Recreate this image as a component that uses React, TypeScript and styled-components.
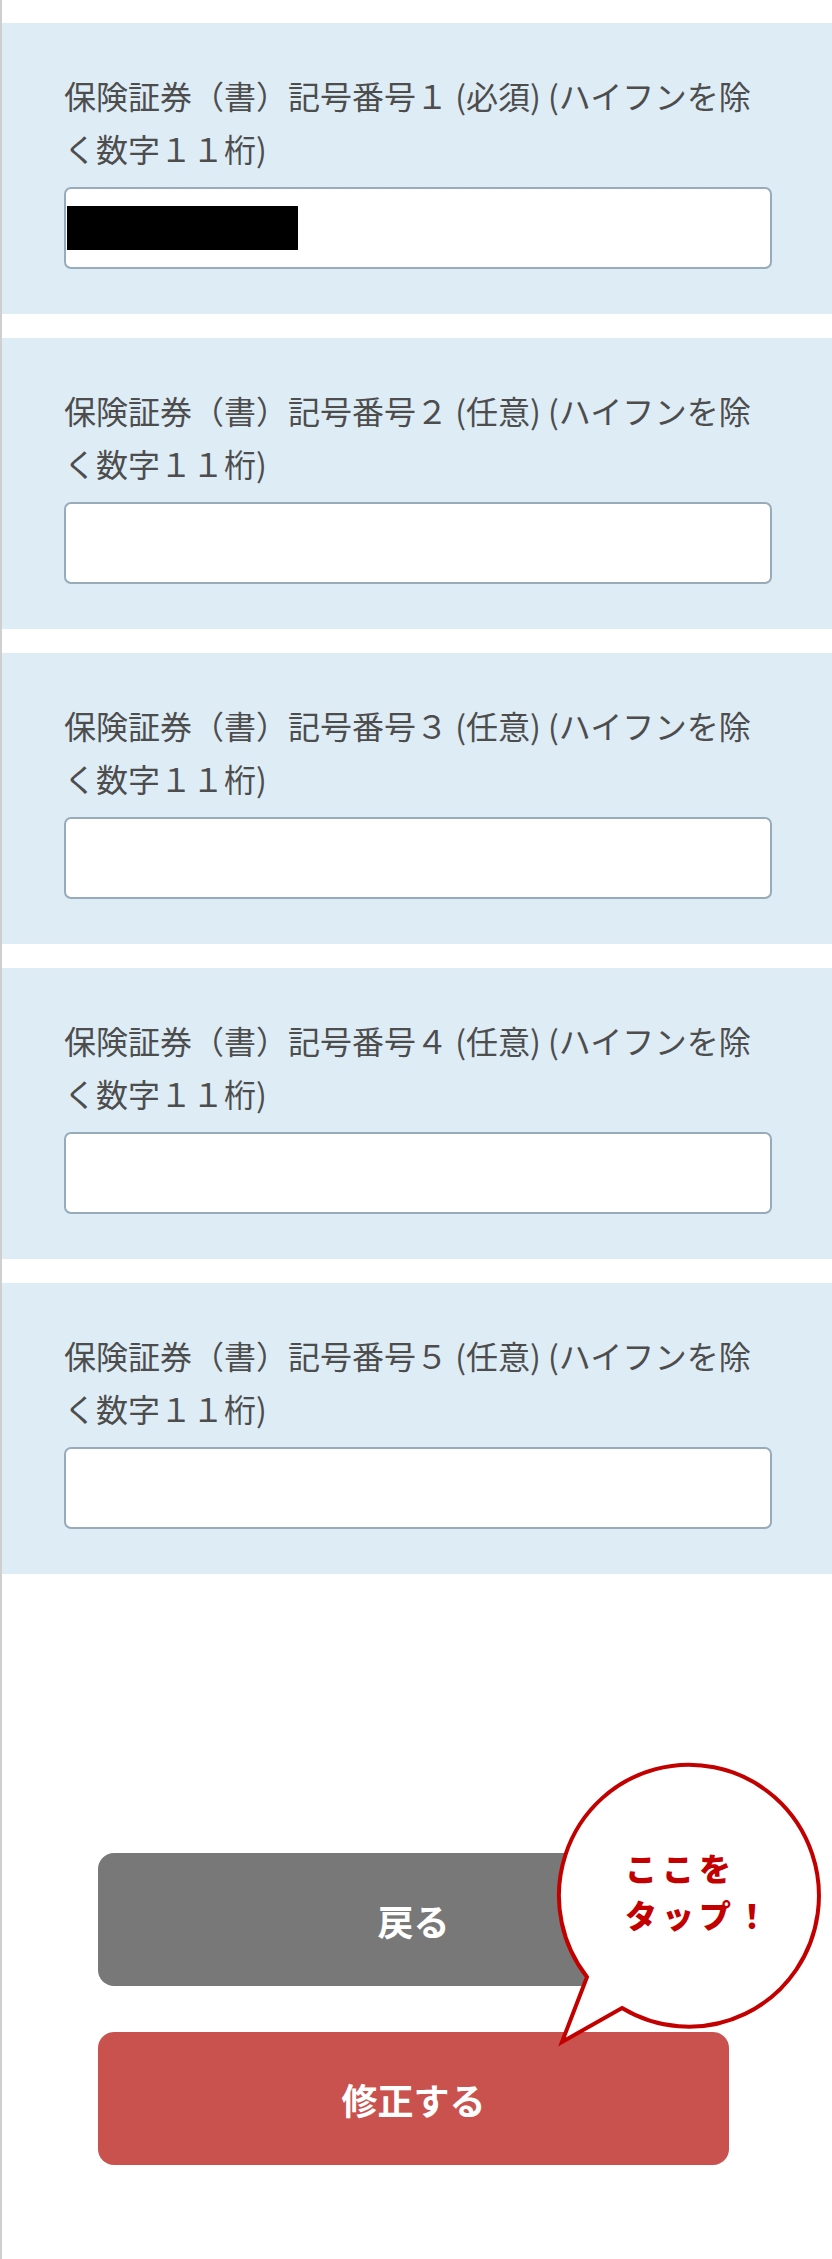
import React from "react";
import styled, { createGlobalStyle } from "styled-components";

const GlobalStyle = createGlobalStyle`
  html, body {
    margin: 0;
    padding: 0;
    background: #ffffff;
  }
  body {
    font-family: "Noto Sans CJK JP", "Noto Sans", sans-serif;
  }
  * {
    box-sizing: border-box;
  }
`;

interface Field {
  id: number;
  required: boolean;
  redacted?: boolean;
}

const fields: Field[] = [
  { id: 1, required: true, redacted: true },
  { id: 2, required: false },
  { id: 3, required: false },
  { id: 4, required: false },
  { id: 5, required: false },
];

// full-width digit, as on the original form
const toWide = (n: number) => String.fromCharCode(0xff10 + n);

const labelText = (field: Field) =>
  `保険証券（書）記号番号${toWide(field.id)} (${field.required ? "必須" : "任意"}) (ハイフンを除く数字１１桁)`;

const App: React.FC = () => {
  return (
    <>
      <GlobalStyle />
      <Page>
        <FieldList>
          {fields.map((field) => (
            <FieldPanel key={field.id}>
              <Label htmlFor={`policy-${field.id}`}>{labelText(field)}</Label>
              <InputWrap>
                <TextInput id={`policy-${field.id}`} type="text" />
                {field.redacted && <Redaction />}
              </InputWrap>
            </FieldPanel>
          ))}
        </FieldList>

        <ButtonArea>
          <ActionButton $variant="back">戻る</ActionButton>
          <ActionButton $variant="submit">修正する</ActionButton>

          <Bubble>
            <svg width="270" height="288" viewBox="0 0 270 288">
              <path
                d="M 32 217 L 7 282 L 67 248 A 130 131 0 1 0 32 217 Z"
                fill="#ffffff"
                stroke="#c20000"
                strokeWidth="4"
                strokeLinejoin="miter"
              />
            </svg>
            <BubbleText>
              <BubbleLine>ここを</BubbleLine>
              <BubbleLine>タップ！</BubbleLine>
            </BubbleText>
          </Bubble>
        </ButtonArea>
      </Page>
    </>
  );
};

export default App;

const Page = styled.div`
  min-height: 2259px;
  border-left: 2px solid #cfcfcf;
  padding-top: 23px;
  background: #ffffff;
`;

const FieldList = styled.div`
  display: flex;
  flex-direction: column;
  gap: 24px;
`;

const FieldPanel = styled.div`
  height: 291px;
  background-color: #deecf6;
  padding: 46px 60px 45px 62px;
  display: flex;
  flex-direction: column;
`;

const Label = styled.label`
  display: block;
  margin: 0 0 12px;
  font-size: 32px;
  line-height: 53px;
  color: #4d4d4d;
`;

const InputWrap = styled.div`
  position: relative;
  width: 100%;
`;

const TextInput = styled.input`
  display: block;
  width: 100%;
  height: 82px;
  margin: 0;
  padding: 0 14px;
  border: 2px solid #97abba;
  border-radius: 7px;
  background: #ffffff;
  font-size: 30px;
  font-family: inherit;
  outline: none;
`;

const Redaction = styled.div`
  position: absolute;
  left: 3px;
  top: 19px;
  width: 231px;
  height: 44px;
  background: #000000;
`;

const ButtonArea = styled.div`
  position: relative;
  margin-top: 279px;
  padding-left: 96px;
  display: flex;
  flex-direction: column;
  align-items: flex-start;
  gap: 46px;
`;

const ActionButton = styled.button<{ $variant: "back" | "submit" }>`
  width: 631px;
  height: 133px;
  border: none;
  border-radius: 16px;
  background-color: ${(p) => (p.$variant === "back" ? "#787878" : "#c9524e")};
  color: #ffffff;
  font-family: "Noto Sans CJK JP", sans-serif;
  font-size: 36px;
  font-weight: 700;
  cursor: pointer;
`;

const Bubble = styled.div`
  position: absolute;
  left: 553px;
  top: -93px;
  width: 270px;
  height: 288px;

  svg {
    position: absolute;
    left: 0;
    top: 0;
  }
`;

const BubbleText = styled.div`
  position: absolute;
  left: 70px;
  top: 84px;
  display: flex;
  flex-direction: column;
`;

const BubbleLine = styled.span`
  display: block;
  font-family: "Noto Sans CJK JP", sans-serif;
  font-size: 32px;
  font-weight: 900;
  line-height: 47px;
  letter-spacing: 5px;
  color: #c20000;
  white-space: nowrap;
`;
